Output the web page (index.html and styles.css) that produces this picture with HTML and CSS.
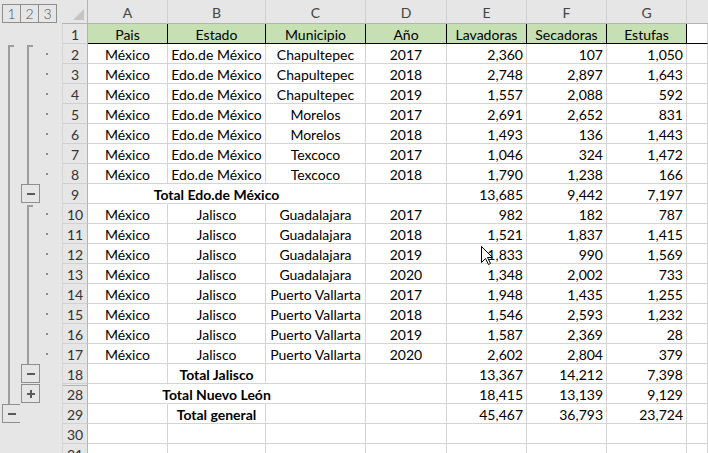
FILE: index.html
```html
<!DOCTYPE html>
<html lang="es">
<head>
<meta charset="utf-8">
<title>Hoja</title>
<link rel="stylesheet" href="styles.css">
</head>
<body>
<div class="sheet">
  <div class="row head">
    <div class="levels"><span class="lvl">1</span><span class="lvl">2</span><span class="lvl">3</span></div>
    <div class="corner"><svg width="25" height="23" viewBox="0 0 25 23"><polygon points="22,9 22,20 11,20" fill="#c4c4c4"/></svg></div>
    <div class="colh">A</div><div class="colh">B</div><div class="colh">C</div><div class="colh">D</div><div class="colh">E</div><div class="colh">F</div><div class="colh">G</div><div class="colh last"></div>
  </div>

  <div class="row r1">
    <div class="g"></div><div class="g"></div><div class="g"></div><div class="rh">1</div>
    <div class="c hdr">Pais</div><div class="c hdr">Estado</div><div class="c hdr">Municipio</div><div class="c hdr">Año</div><div class="c hdr">Lavadoras</div><div class="c hdr">Secadoras</div><div class="c hdr">Estufas</div><div class="c"></div>
  </div>

  <div class="row">
    <div class="g b1t"></div><div class="g b2t"></div><div class="g d3"></div><div class="rh">2</div>
    <div class="c">México</div><div class="c">Edo.de México</div><div class="c">Chapultepec</div><div class="c">2017</div><div class="c n">2,360</div><div class="c n">107</div><div class="c n">1,050</div><div class="c"></div>
  </div>
  <div class="row">
    <div class="g b1"></div><div class="g b2"></div><div class="g d3"></div><div class="rh">3</div>
    <div class="c">México</div><div class="c">Edo.de México</div><div class="c">Chapultepec</div><div class="c">2018</div><div class="c n">2,748</div><div class="c n">2,897</div><div class="c n">1,643</div><div class="c"></div>
  </div>
  <div class="row">
    <div class="g b1"></div><div class="g b2"></div><div class="g d3"></div><div class="rh">4</div>
    <div class="c">México</div><div class="c">Edo.de México</div><div class="c">Chapultepec</div><div class="c">2019</div><div class="c n">1,557</div><div class="c n">2,088</div><div class="c n">592</div><div class="c"></div>
  </div>
  <div class="row">
    <div class="g b1"></div><div class="g b2"></div><div class="g d3"></div><div class="rh">5</div>
    <div class="c">México</div><div class="c">Edo.de México</div><div class="c">Morelos</div><div class="c">2017</div><div class="c n">2,691</div><div class="c n">2,652</div><div class="c n">831</div><div class="c"></div>
  </div>
  <div class="row">
    <div class="g b1"></div><div class="g b2"></div><div class="g d3"></div><div class="rh">6</div>
    <div class="c">México</div><div class="c">Edo.de México</div><div class="c">Morelos</div><div class="c">2018</div><div class="c n">1,493</div><div class="c n">136</div><div class="c n">1,443</div><div class="c"></div>
  </div>
  <div class="row">
    <div class="g b1"></div><div class="g b2"></div><div class="g d3"></div><div class="rh">7</div>
    <div class="c">México</div><div class="c">Edo.de México</div><div class="c">Texcoco</div><div class="c">2017</div><div class="c n">1,046</div><div class="c n">324</div><div class="c n">1,472</div><div class="c"></div>
  </div>
  <div class="row">
    <div class="g b1"></div><div class="g b2"></div><div class="g d3"></div><div class="rh">8</div>
    <div class="c">México</div><div class="c">Edo.de México</div><div class="c">Texcoco</div><div class="c">2018</div><div class="c n">1,790</div><div class="c n">1,238</div><div class="c n">166</div><div class="c"></div>
  </div>
  <div class="row">
    <div class="g b1"></div><div class="g"><div class="btn btn2 minus"></div></div><div class="g"></div><div class="rh">9</div>
    <div class="c open"></div><div class="c open"><b>Total Edo.de México</b></div><div class="c"></div><div class="c"></div><div class="c n">13,685</div><div class="c n">9,442</div><div class="c n">7,197</div><div class="c"></div>
  </div>

  <div class="row">
    <div class="g b1"></div><div class="g b2t"></div><div class="g d3"></div><div class="rh">10</div>
    <div class="c">México</div><div class="c">Jalisco</div><div class="c">Guadalajara</div><div class="c">2017</div><div class="c n">982</div><div class="c n">182</div><div class="c n">787</div><div class="c"></div>
  </div>
  <div class="row">
    <div class="g b1"></div><div class="g b2"></div><div class="g d3"></div><div class="rh">11</div>
    <div class="c">México</div><div class="c">Jalisco</div><div class="c">Guadalajara</div><div class="c">2018</div><div class="c n">1,521</div><div class="c n">1,837</div><div class="c n">1,415</div><div class="c"></div>
  </div>
  <div class="row">
    <div class="g b1"></div><div class="g b2"></div><div class="g d3"></div><div class="rh">12</div>
    <div class="c">México</div><div class="c">Jalisco</div><div class="c">Guadalajara</div><div class="c">2019</div><div class="c n">1,833</div><div class="c n">990</div><div class="c n">1,569</div><div class="c"></div>
  </div>
  <div class="row">
    <div class="g b1"></div><div class="g b2"></div><div class="g d3"></div><div class="rh">13</div>
    <div class="c">México</div><div class="c">Jalisco</div><div class="c">Guadalajara</div><div class="c">2020</div><div class="c n">1,348</div><div class="c n">2,002</div><div class="c n">733</div><div class="c"></div>
  </div>
  <div class="row">
    <div class="g b1"></div><div class="g b2"></div><div class="g d3"></div><div class="rh">14</div>
    <div class="c">México</div><div class="c">Jalisco</div><div class="c">Puerto Vallarta</div><div class="c">2017</div><div class="c n">1,948</div><div class="c n">1,435</div><div class="c n">1,255</div><div class="c"></div>
  </div>
  <div class="row">
    <div class="g b1"></div><div class="g b2"></div><div class="g d3"></div><div class="rh">15</div>
    <div class="c">México</div><div class="c">Jalisco</div><div class="c">Puerto Vallarta</div><div class="c">2018</div><div class="c n">1,546</div><div class="c n">2,593</div><div class="c n">1,232</div><div class="c"></div>
  </div>
  <div class="row">
    <div class="g b1"></div><div class="g b2"></div><div class="g d3"></div><div class="rh">16</div>
    <div class="c">México</div><div class="c">Jalisco</div><div class="c">Puerto Vallarta</div><div class="c">2019</div><div class="c n">1,587</div><div class="c n">2,369</div><div class="c n">28</div><div class="c"></div>
  </div>
  <div class="row">
    <div class="g b1"></div><div class="g b2"></div><div class="g d3"></div><div class="rh">17</div>
    <div class="c">México</div><div class="c">Jalisco</div><div class="c">Puerto Vallarta</div><div class="c">2020</div><div class="c n">2,602</div><div class="c n">2,804</div><div class="c n">379</div><div class="c"></div>
  </div>
  <div class="row">
    <div class="g b1"></div><div class="g"><div class="btn btn2 minus"></div></div><div class="g"></div><div class="rh">18</div>
    <div class="c"></div><div class="c"><b>Total Jalisco</b></div><div class="c"></div><div class="c"></div><div class="c n">13,367</div><div class="c n">14,212</div><div class="c n">7,398</div><div class="c"></div>
  </div>
  <div class="row">
    <div class="g b1"></div><div class="g"><div class="btn btn2 plus"></div></div><div class="g"></div><div class="rh gap">28</div>
    <div class="c open"></div><div class="c open"><b>Total Nuevo León</b></div><div class="c"></div><div class="c"></div><div class="c n">18,415</div><div class="c n">13,139</div><div class="c n">9,129</div><div class="c"></div>
  </div>
  <div class="row">
    <div class="g"><div class="btn btn1 minus"></div></div><div class="g"></div><div class="g"></div><div class="rh">29</div>
    <div class="c"></div><div class="c"><b>Total general</b></div><div class="c"></div><div class="c"></div><div class="c n">45,467</div><div class="c n">36,793</div><div class="c n">23,724</div><div class="c"></div>
  </div>
  <div class="row">
    <div class="g"></div><div class="g"></div><div class="g"></div><div class="rh">30</div>
    <div class="c"></div><div class="c"></div><div class="c"></div><div class="c"></div><div class="c"></div><div class="c"></div><div class="c"></div><div class="c"></div>
  </div>
  <div class="row">
    <div class="g"></div><div class="g"></div><div class="g"></div><div class="rh">31</div>
    <div class="c"></div><div class="c"></div><div class="c"></div><div class="c"></div><div class="c"></div><div class="c"></div><div class="c"></div><div class="c"></div>
  </div>
</div>
<svg class="cursor" width="14" height="20" viewBox="0 0 14 20"><path d="M0.5 0.5 L0.5 16.5 L4.5 12.5 L7.5 18.5 L9.5 17.5 L6.5 11.5 L11.5 11.5 Z" fill="#fff" stroke="#000" stroke-width="1" stroke-linejoin="miter"/></svg>
</body>
</html>
```

FILE: styles.css
```css
html, body {
  margin: 0;
  padding: 0;
}

body {
  width: 708px;
  height: 453px;
  overflow: hidden;
  position: relative;
  background: #fff;
  font-family: Lato, "Liberation Sans", sans-serif;
  font-size: 14px;
  color: #000;
}

.sheet {
  width: 708px;
}

.row {
  display: grid;
  grid-template-columns: 20px 20px 22px 26px 80px 98px 100px 81px 80px 80px 80px 1fr;
  height: 20px;
}

.head {
  height: 24px;
}

/* outline gutter */
.levels {
  grid-column: 1 / 4;
  background: #e6e6e6;
  display: flex;
  padding: 4px 0 0 2px;
  box-sizing: border-box;
}

.lvl {
  width: 19px;
  height: 19px;
  box-sizing: border-box;
  border: 1px solid #8e8e8e;
  margin-right: -1px;
  display: flex;
  align-items: center;
  justify-content: center;
  font-size: 14px;
  color: #505050;
  font-weight: 300;
}

.g {
  background: #e6e6e6;
  display: flex;
  align-items: flex-start;
}

.b1 {
  background: linear-gradient(#9d9d9d, #9d9d9d) 8px 0 / 2px 100% no-repeat, #e6e6e6;
}

.b1t {
  background:
    linear-gradient(#9d9d9d, #9d9d9d) 8px 1px / 6px 2px no-repeat,
    linear-gradient(#9d9d9d, #9d9d9d) 8px 1px / 2px 100% no-repeat,
    #e6e6e6;
}

.b2 {
  background: linear-gradient(#9d9d9d, #9d9d9d) 7px 0 / 2px 100% no-repeat, #e6e6e6;
}

.b2t {
  background:
    linear-gradient(#9d9d9d, #9d9d9d) 7px 1px / 6px 2px no-repeat,
    linear-gradient(#9d9d9d, #9d9d9d) 7px 1px / 2px 100% no-repeat,
    #e6e6e6;
}

.d3 {
  background: linear-gradient(#8f8f8f, #8f8f8f) 6px 9px / 2px 2px no-repeat, #e6e6e6;
}

.btn {
  width: 19px;
  height: 19px;
  box-sizing: border-box;
  border: 1px solid #8e8e8e;
  flex: none;
}

.btn1 {
  margin-left: 2px;
}

.btn2 {
  margin-left: 1px;
}

.minus {
  background: linear-gradient(#5a5a5a, #5a5a5a) center / 8px 2px no-repeat, #e6e6e6;
}

.plus {
  background:
    linear-gradient(#5a5a5a, #5a5a5a) center / 8px 2px no-repeat,
    linear-gradient(#5a5a5a, #5a5a5a) center / 2px 8px no-repeat,
    #e6e6e6;
}

/* headers */
.corner {
  background: #e6e6e6;
  border-right: 1px solid #b4b4b4;
  border-bottom: 1px solid #b4b4b4;
  box-sizing: border-box;
}

.corner svg {
  display: block;
}

.colh {
  background: #e6e6e6;
  border-right: 1px solid #d0d0d0;
  border-bottom: 1px solid #b4b4b4;
  box-sizing: border-box;
  display: flex;
  align-items: center;
  justify-content: center;
  color: #444;
  padding-top: 2px;
}

.colh.last {
  border-right: none;
}

.rh {
  background: #e6e6e6;
  border-left: 1px solid #d4d4d4;
  border-right: 1px solid #b4b4b4;
  border-bottom: 1px solid #d0d0d0;
  box-sizing: border-box;
  display: flex;
  align-items: center;
  justify-content: center;
  color: #333;
  padding-top: 1px;
}

.rh.gap {
  box-shadow: inset 0 1px #e6e6e6, inset 0 2px #b4b4b4;
}

/* cells */
.c {
  border-right: 1px solid #d4d4d4;
  border-bottom: 1px solid #d4d4d4;
  box-sizing: border-box;
  display: flex;
  align-items: center;
  justify-content: center;
  white-space: nowrap;
  padding: 1px 3px 0;
  min-width: 0;
}

.c b {
  font-weight: 700;
}

.c.n {
  justify-content: flex-end;
}

.c.open {
  border-right-color: transparent;
}

.r1 .c {
  border-bottom-color: #000;
}

.r1 .c.hdr {
  background: #c6e0b4;
  border-right-color: #000;
}

.cursor {
  position: absolute;
  left: 481px;
  top: 246px;
}
```
